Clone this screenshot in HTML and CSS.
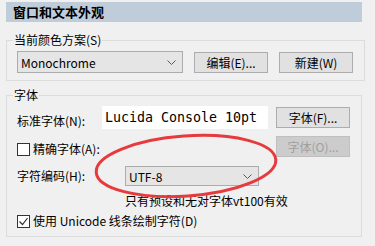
FILE: index.html
```html
<!DOCTYPE html>
<html lang="zh-CN">
<head>
    <meta charset="UTF-8">
    <meta name="viewport" content="width=device-width, initial-scale=1.0">
    <title>窗口和文本外观</title>
    <link rel="stylesheet" href="styles.css">
</head>
<body>
    <div class="page">
        <div class="title-bar">窗口和文本外观</div>

        <fieldset class="group scheme-group">
            <legend>当前颜色方案(S)</legend>
            <div class="row">
                <div class="combo scheme-combo">
                    <span>Monochrome</span>
                    <svg class="chevron" width="9" height="5" viewBox="0 0 9 5"><polyline points="0.5,0.5 4.5,4.5 8.5,0.5"/></svg>
                </div>
                <button class="btn">编辑(E)...</button>
                <button class="btn">新建(W)</button>
            </div>
        </fieldset>

        <fieldset class="group font-group">
            <legend>字体</legend>
            <div class="row font-row">
                <span class="label std-label">标准字体(N):</span>
                <div class="font-preview">Lucida Console 10pt</div>
                <button class="btn push-right">字体(F)...</button>
            </div>
            <div class="row exact-row">
                <span class="check"></span>
                <span class="label">精确字体(A):</span>
                <button class="btn push-right" disabled>字体(O)...</button>
            </div>
            <div class="row charset-row">
                <span class="label charset-label">字符编码(H):</span>
                <div class="combo charset-combo">
                    <span>UTF-8</span>
                    <svg class="chevron" width="9" height="5" viewBox="0 0 9 5"><polyline points="0.5,0.5 4.5,4.5 8.5,0.5"/></svg>
                </div>
            </div>
            <div class="note">只有预设和无对字体vt100有效</div>
            <div class="row unicode-row">
                <span class="check checked">
                    <svg width="11" height="11" viewBox="0 0 11 11"><polyline points="1.5,5.5 4.5,8.5 9.5,2"/></svg>
                </span>
                <span class="label">使用 Unicode 线条绘制字符(D)</span>
            </div>
        </fieldset>

        <svg class="highlight" width="375" height="246" viewBox="0 0 375 246">
            <ellipse cx="186" cy="166" rx="90" ry="30" transform="rotate(-4 186 166)"/>
        </svg>
    </div>
</body>
</html>
```

FILE: styles.css
```css
body {
    margin: 0;
    background-color: #f0f0f0;
    color: #000;
    font-family: "Noto Sans CJK SC", sans-serif;
    font-size: 12px;
}
.page {
    position: relative;
    width: 375px;
    height: 246px;
    padding: 2px 0 0 6px;
    box-sizing: border-box;
    overflow: hidden;
}
.title-bar {
    width: 356px;
    height: 20px;
    line-height: 20px;
    padding-left: 7px;
    box-sizing: border-box;
    background-color: #bfcddb;
    font-size: 13px;
    font-weight: bold;
}
.group {
    width: 356px;
    box-sizing: border-box;
    margin: 0;
    border: 1px solid #dcdcdc;
    padding: 4px 11px 7px 10px;
}
.group legend {
    line-height: 14px;
    padding: 0 1px;
    margin-left: -4px;
}
.scheme-group { margin-top: 11px; }
.font-group {
    margin-top: 7px;
    padding-bottom: 8px;
}
.row {
    display: flex;
    align-items: center;
}
.label {
    line-height: 14px;
    white-space: nowrap;
}
.btn {
    width: 74px;
    height: 21px;
    padding: 0;
    border: 1px solid #adadad;
    background-color: #e1e1e1;
    color: #000;
    font-family: inherit;
    font-size: 12px;
    line-height: 19px;
}
.btn:disabled {
    background-color: #cccccc;
    border-color: #bfbfbf;
    color: #a0a0a0;
}
.scheme-group .btn { margin-left: 11px; }
.push-right { margin-left: auto; }
.combo {
    display: flex;
    align-items: center;
    justify-content: space-between;
    box-sizing: border-box;
    border: 1px solid #acacac;
    background-color: #e5e5e5;
    padding: 0 6px 0 3px;
}
.scheme-combo {
    width: 166px;
    height: 22px;
}
.charset-combo {
    width: 134px;
    height: 20px;
}
.chevron polyline {
    fill: none;
    stroke: #5a5a5a;
    stroke-width: 1;
}
.std-label {
    width: 85px;
    padding-top: 7px;
}
.font-preview {
    width: 166px;
    height: 23px;
    line-height: 23px;
    box-sizing: border-box;
    padding-left: 3px;
    background-color: #fff;
    font-family: "DejaVu Sans Mono", monospace;
    font-size: 13.3px;
}
.exact-row {
    margin-top: 7px;
    height: 21px;
}
.exact-row .check,
.exact-row .label { margin-top: 5px; }
.check {
    display: flex;
    align-items: center;
    justify-content: center;
    width: 13px;
    height: 13px;
    box-sizing: border-box;
    border: 1px solid #333;
    background-color: #fff;
    margin-right: 3px;
}
.check polyline {
    fill: none;
    stroke: #333;
    stroke-width: 1.2;
}
.charset-row { margin-top: 9px; }
.charset-label { width: 108px; }
.note {
    margin: 8px 0 0 108px;
    line-height: 14px;
    white-space: nowrap;
}
.unicode-row {
    margin-top: 6px;
    height: 14px;
}
.highlight {
    position: absolute;
    left: 0;
    top: 0;
    pointer-events: none;
}
.highlight ellipse {
    fill: none;
    stroke: #e63a3c;
    stroke-width: 3;
}
```
